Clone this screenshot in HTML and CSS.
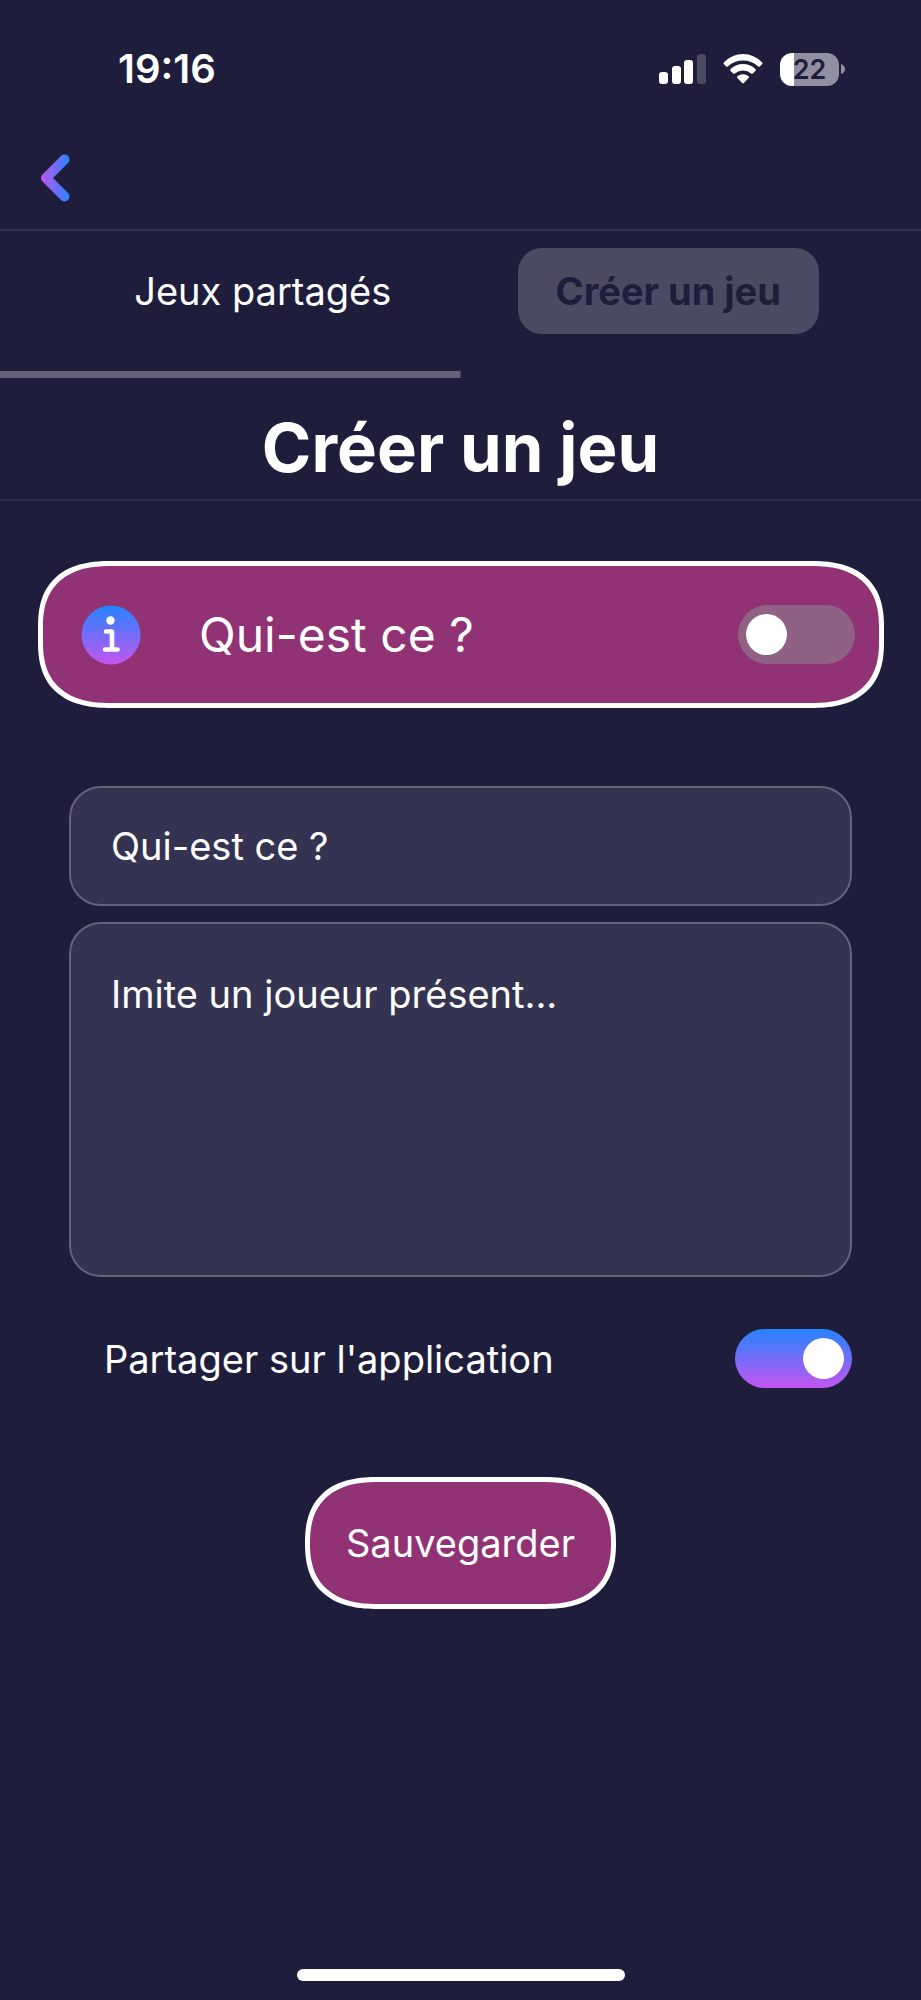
FILE: index.html
```html
<!DOCTYPE html>
<html lang="fr">
<head>
<meta charset="utf-8">
<meta name="viewport" content="width=device-width, initial-scale=1">
<title>Créer un jeu</title>
<link rel="stylesheet" href="styles.css">
</head>
<body>
<div class="status-bar">
  <time class="clock">19:16</time>
  <div class="status-icons">
    <svg class="signal" viewBox="0 0 47 30" width="47" height="30" aria-hidden="true">
      <rect x="0" y="18" width="9" height="12" rx="3"/>
      <rect x="13" y="12" width="9" height="18" rx="3"/>
      <rect x="25" y="6" width="9" height="24" rx="3"/>
      <rect class="dim" x="38" y="0" width="9" height="30" rx="3"/>
    </svg>
    <svg class="wifi" viewBox="0 0 40 30" width="40" height="30" aria-hidden="true">
      <path d="M1 8.300Q9.500 0 20 0T39 8.300Q40 9.200 39 10.200L36.800 12.400Q36 13 35.200 12.400Q28.500 6.500 20 6.500T4.800 12.400Q4 13 3.200 12.400L1 10.200Q0 9.200 1 8.300Z"/>
      <path d="M7.600 15Q13 10 20 10T32.400 15Q33.300 16 32.400 17L29.800 19.600Q29 20.200 28.200 19.600Q24.600 16.500 20 16.500T11.800 19.600Q11 20.200 10.200 19.600L7.600 17Q6.700 16 7.600 15Z"/>
      <path d="M14.400 22.200Q17 20.200 20 20.200T25.600 22.200Q26.500 23 25.600 24L20.800 29Q20 29.800 19.200 29L14.400 24Q13.500 23 14.400 22.200Z"/>
    </svg>
    <div class="battery"><span class="battery-level">22</span><svg viewBox="0 0 4 10" width="4" height="10" aria-hidden="true"><path d="M0 0Q4 1.500 4 5T0 10Z"/></svg></div>
  </div>
</div>
<header class="nav-bar">
  <button class="back" type="button" aria-label="Retour">
    <svg viewBox="0 0 30 48" width="30" height="48" aria-hidden="true">
      <defs><linearGradient id="back-gradient" gradientUnits="userSpaceOnUse" x1="0" y1="0" x2="30" y2="0"><stop offset="0" stop-color="#c455f0"/><stop offset="1" stop-color="#2484ff"/></linearGradient></defs>
      <path d="M24.500 5.500L6 24L24.500 42.500" fill="none" stroke="url(#back-gradient)" stroke-width="10" stroke-linecap="round" stroke-linejoin="round"/>
    </svg>
  </button>
</header>
<nav class="tabs">
  <button class="tab" type="button">Jeux partagés</button>
  <button class="tab tab-selected" type="button">Créer un jeu</button>
</nav>
<main>
  <h1 class="title">Créer un jeu</h1>
  <section class="game-card">
    <button class="info" type="button" aria-label="Informations">
      <svg viewBox="0 0 60 60" width="60" height="60" aria-hidden="true">
        <defs><linearGradient id="info-gradient" x1="0" y1="0" x2="0" y2="1"><stop offset="0" stop-color="#2484ff"/><stop offset="1" stop-color="#c455f0"/></linearGradient></defs>
        <circle cx="30" cy="30" r="29.500" fill="url(#info-gradient)"/>
        <circle cx="29.500" cy="15.500" r="4.200" fill="#fff"/>
        <path d="M25 26.500H31V44.500M24 44.500H36.500" fill="none" stroke="#fff" stroke-width="4.600" stroke-linecap="round" stroke-linejoin="round"/>
      </svg>
    </button>
    <label class="game-name" for="game-toggle">Qui-est ce ?</label>
    <input class="switch" id="game-toggle" type="checkbox">
  </section>
  <form class="game-form">
    <input class="field" type="text" aria-label="Nom du jeu" value="Qui-est ce ?">
    <textarea class="field field-long" aria-label="Description du jeu">Imite un joueur présent...</textarea>
    <div class="share">
      <label for="share-toggle">Partager sur l'application</label>
      <input class="switch" id="share-toggle" type="checkbox" checked>
    </div>
    <button class="save" type="button">Sauvegarder</button>
  </form>
</main>
<div class="home-indicator"></div>
</body>
</html>
```
FILE: styles.css
```css
* {
  box-sizing: border-box;
}

body {
  margin: 0;
  min-height: 100vh;
  display: flex;
  flex-direction: column;
  background: #1e1e3c;
  color: #fff;
  font-family: Inter, "Liberation Sans", sans-serif;
  font-size: 38px;
  line-height: 48px;
}

button,
input,
textarea {
  margin: 0;
  padding: 0;
  border: 0;
  background: none;
  color: inherit;
  font: inherit;
}

svg {
  display: block;
}

.status-bar {
  display: flex;
  align-items: center;
  justify-content: space-between;
  height: 138px;
  padding: 0 76px 0 118px;
}

.clock {
  font-size: 40px;
  font-weight: 600;
}

.status-icons {
  display: flex;
  align-items: center;
  gap: 17px;
  fill: #fff;
}

.dim {
  fill: #4b4a63;
}

.battery {
  display: flex;
  align-items: center;
  gap: 2px;
  fill: #918fa1;
}

.battery-level {
  width: 59px;
  border-radius: 12px;
  background: linear-gradient(90deg, #fff 14px, #918fa1 14px);
  color: #1e1e3c;
  font-size: 27px;
  font-weight: 600;
  line-height: 33px;
  text-align: center;
}

.nav-bar {
  height: 93px;
  padding: 16px 40px;
  border-bottom: 2px solid #2e2d4a;
}

.tabs {
  display: grid;
  grid-template-columns: 1fr 1fr;
  justify-items: center;
  padding: 17px 0 44px;
  background: linear-gradient(#64637a, #64637a) left bottom / 50% 7px no-repeat;
}

.tab {
  padding: 19px 38px;
  border-radius: 24px;
}

.tab:first-child {
  margin-left: 65px;
}

.tab-selected {
  margin-right: 45px;
  background: #4b4a63;
  color: #1e1e3c;
  font-weight: 700;
}

.title {
  margin: 0;
  padding: 30px 0 11px;
  border-bottom: 2px solid #2e2d4a;
  font-size: 67px;
  font-weight: 700;
  line-height: 80px;
  text-align: center;
}

.game-card {
  display: flex;
  align-items: center;
  height: 147px;
  margin: 60px 37px 78px 38px;
  padding: 0 24px 0 38px;
  border: 5px solid #fff;
  border-radius: 66px / 62px;
  background: #903273;
}

.game-name {
  flex: 1;
  margin-left: 58px;
  font-size: 48px;
  line-height: 60px;
}

.switch {
  appearance: none;
  flex: none;
  display: flex;
  align-items: center;
  width: 117px;
  height: 59px;
  padding: 0 8px;
  border-radius: 30px;
  background: #8f6184;
}

.switch::before {
  content: "";
  width: 41px;
  height: 41px;
  border-radius: 50%;
  background: #fff;
}

.switch:checked {
  justify-content: flex-end;
  background: linear-gradient(#2484ff, #c455f0);
}

.game-form {
  display: flex;
  flex-direction: column;
  gap: 16px;
  padding: 0 69px;
}

.field {
  width: 100%;
  height: 120px;
  padding: 0 40px;
  border: 2px solid #64637a;
  border-radius: 32px;
  background: #343351;
}

.field-long {
  height: 355px;
  padding: 46px 40px;
  resize: none;
}

.share {
  display: flex;
  align-items: center;
  justify-content: space-between;
  margin: 36px 0 73px;
  padding-left: 35px;
}

.save {
  align-self: center;
  padding: 37px 36px;
  border: 5px solid #fff;
  border-radius: 66px / 62px;
  background: #903273;
}

@supports (corner-shape: superellipse(1.3)) {
  .game-card,
  .save {
    border-radius: 73px / 66px;
    corner-shape: superellipse(1.3);
  }
}

.home-indicator {
  align-self: center;
  width: 328px;
  height: 12px;
  margin: auto 0 19px;
  border-radius: 6px;
  background: #fff;
}
```
